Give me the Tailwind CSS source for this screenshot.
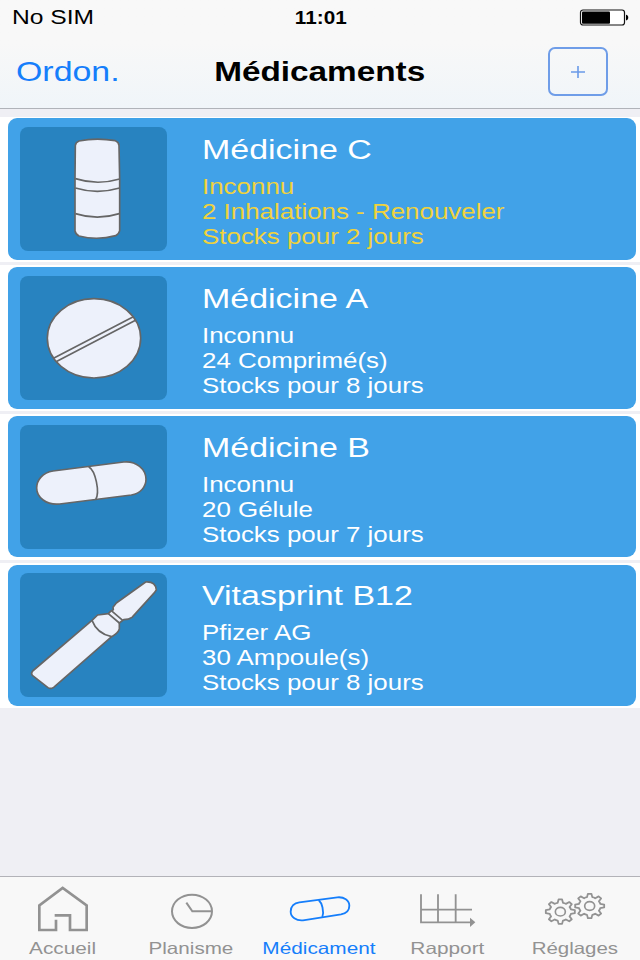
<!DOCTYPE html>
<html lang="fr">
<head>
    <meta charset="UTF-8">
    <meta name="viewport" content="width=device-width, initial-scale=1.0">
    <title>Médicaments</title>
    <script src="https://cdn.jsdelivr.net/npm/@tailwindcss/browser@4"></script>
</head>
<body class="w-[640px] h-[960px] overflow-hidden flex flex-col bg-[#efeff4] font-['Liberation_Sans',Arial,sans-serif] whitespace-nowrap">

    <!-- Status bar and navigation -->
    <header class="h-[109px] shrink-0 flex flex-col bg-linear-to-b from-[#f8f8f8] from-40% to-[#f0f5f9] border-b border-[#b0b3b9]">
        <div class="h-[35px] grid grid-cols-3 items-center pl-3 pr-[11px] text-black">
            <span class="text-[20px] leading-[35px] origin-left scale-x-[1.23] justify-self-start">No SIM</span>
            <span class="text-[19px] leading-[35px] font-bold scale-x-[1.09] justify-self-center">11:01</span>
            <svg class="w-[50px] h-[18px] justify-self-end" viewBox="0 0 50 18">
                <rect x="1.5" y="1" width="44" height="15" rx="2.5" fill="#fff" stroke="#111" stroke-width="1.2"/>
                <rect x="3" y="2.4" width="28" height="12.3" rx="1" fill="#000"/>
                <path d="M47 5.8c3 0 3 5.6 0 5.6z" fill="#000"/>
            </svg>
        </div>
        <div class="h-[73px] grid grid-cols-3 items-center pl-4 pr-8">
            <a href="#" class="text-[28px] leading-8 text-[#157efb] origin-left scale-x-[1.21] justify-self-start">Ordon.</a>
            <h1 class="text-[28px] leading-8 font-bold text-black scale-x-[1.19] justify-self-center ml-4">Médicaments</h1>
            <button class="w-[60px] h-[49px] rounded-[7px] border-2 border-[#6f9de8] justify-self-end flex items-center justify-center">
                <svg class="w-[14px] h-3" viewBox="0 0 14 12" fill="none" stroke="#6a9ae8" stroke-width="1.6"><path d="M0 6h14M7 0v12"/></svg>
            </button>
        </div>
    </header>

    <!-- Medicine list -->
    <main class="flex-1 pt-[7.5px]">
        <ul class="flex flex-col gap-[3.3px]">
            <li class="bg-white h-[145.5px] pt-[1.8px] pl-2 pr-1">
                <article class="h-[141.5px] rounded-[9px] bg-[#41a2e8] flex pl-[11.5px] pt-[8.7px]">
                    <svg class="w-[147px] h-[124px] rounded-lg bg-[#2883c0]" viewBox="59 51 441 372" preserveAspectRatio="none" fill="#edf1fb" stroke="#666" stroke-width="5" stroke-linejoin="round">
                        <path d="M225 106Q226 97 236 93Q288 82 345 92Q355 96 356 106L358 207V362Q356 372 346 377Q290 392 236 378Q226 373 224 363V207Z"/>
                        <path fill="none" d="M225 206Q291 227 358 207M225 234Q291 254 358 234M225 311Q291 332 357 311"/>
                    </svg>
                    <div class="ml-[35px] pt-[6px] origin-left scale-x-[1.205] text-[#f0d23c] text-[21.5px] leading-[25px]">
                        <h2 class="text-[28.2px] leading-8 mb-[10px] text-white">Médicine C</h2>
                        <p>Inconnu</p>
                        <p>2 Inhalations - Renouveler</p>
                        <p>Stocks pour 2 jours</p>
                    </div>
                </article>
            </li>
            <li class="bg-white h-[145.5px] pt-[1.8px] pl-2 pr-1">
                <article class="h-[141.5px] rounded-[9px] bg-[#41a2e8] flex pl-[11.5px] pt-[8.7px]">
                    <svg class="w-[147px] h-[124px] rounded-lg bg-[#2883c0]" viewBox="59 47 441 372" preserveAspectRatio="none" fill="#edf1fb" stroke="#666" stroke-width="5">
                        <ellipse cx="281" cy="234" rx="140" ry="119"/>
                        <path d="M161 293L399 169M167 304L407 179"/>
                    </svg>
                    <div class="ml-[35px] pt-[6px] origin-left scale-x-[1.205] text-white text-[21.5px] leading-[25px]">
                        <h2 class="text-[28.2px] leading-8 mb-[10px]">Médicine A</h2>
                        <p>Inconnu</p>
                        <p>24 Comprimé(s)</p>
                        <p>Stocks pour 8 jours</p>
                    </div>
                </article>
            </li>
            <li class="bg-white h-[145.5px] pt-[1.8px] pl-2 pr-1">
                <article class="h-[141.5px] rounded-[9px] bg-[#41a2e8] flex pl-[11.5px] pt-[8.7px]">
                    <svg class="w-[147px] h-[124px] rounded-lg bg-[#2883c0]" viewBox="59 44 441 372" preserveAspectRatio="none" fill="#edf1fb" stroke="#666" stroke-width="5">
                        <path d="M158 182L370 155C408 151 437 177 437 207C437 230 420 250 393 254L178 281C138 285 109 261 109 233C109 209 127 187 158 182Z"/>
                        <path fill="none" d="M265 169C286 181 299 246 286 268"/>
                    </svg>
                    <div class="ml-[35px] pt-[6px] origin-left scale-x-[1.205] text-white text-[21.5px] leading-[25px]">
                        <h2 class="text-[28.2px] leading-8 mb-[10px]">Médicine B</h2>
                        <p>Inconnu</p>
                        <p>20 Gélule</p>
                        <p>Stocks pour 7 jours</p>
                    </div>
                </article>
            </li>
            <li class="bg-white h-[145.5px] pt-[1.8px] pl-2 pr-1">
                <article class="h-[141.5px] rounded-[9px] bg-[#41a2e8] flex pl-[11.5px] pt-[8.7px]">
                    <svg class="w-[147px] h-[124px] rounded-lg bg-[#2883c0]" viewBox="59 40 441 372" preserveAspectRatio="none" fill="#edf1fb" stroke="#666" stroke-width="5" stroke-linejoin="round">
                        <path d="M275 182L292 166L324 162L333 153L339 150L338 143L348 130L436 67Q466 65 468 91L463 98L395 173Q386 180 370 180L357 190V208Q353 221 334 231L160 383Q151 389 143 384L96 347Q91 341 97 334Z"/>
                        <path fill="none" d="M275 182Q290 222 334 231M324 162L357 190M333 153L367 182"/>
                    </svg>
                    <div class="ml-[35px] pt-[6px] origin-left scale-x-[1.205] text-white text-[21.5px] leading-[25px]">
                        <h2 class="text-[28.2px] leading-8 mb-[10px]">Vitasprint B12</h2>
                        <p>Pfizer AG</p>
                        <p>30 Ampoule(s)</p>
                        <p>Stocks pour 8 jours</p>
                    </div>
                </article>
            </li>
        </ul>
    </main>

    <!-- Tab bar -->
    <nav class="h-[84px] shrink-0 grid grid-cols-5 bg-[#f8f8f8] border-t border-[#b2b2b8] text-[16.5px] leading-5 text-[#929292]">
        <a href="#" class="flex flex-col items-center pt-1">
            <svg class="w-32 h-[54px]" viewBox="0 33 384 162" fill="none" stroke="currentColor" stroke-width="8">
                <path d="M168 149V180H118V106L188 54L260 106V180H210V136H164"/>
            </svg>
            <span class="mt-[3px] scale-x-[1.26] -translate-x-px">Accueil</span>
        </a>
        <a href="#" class="flex flex-col items-center pt-1">
            <svg class="w-32 h-[54px]" viewBox="384 33 384 162" fill="none" stroke="currentColor" stroke-width="6">
                <ellipse cx="576" cy="124" rx="60" ry="50"/>
                <path d="M559 98L577 124H634"/>
            </svg>
            <span class="mt-[3px] scale-x-[1.25] -translate-x-px">Planisme</span>
        </a>
        <a href="#" class="flex flex-col items-center pt-1 text-[#157efb]">
            <svg class="w-32 h-[54px]" viewBox="18 33 384 162" fill="none" stroke="currentColor" stroke-width="5.5">
                <path d="M148 97L262 82C282 80 298 91 298 107C298 121 288 130 273 133L159 151C139 153 122 141 122 125C122 109 133 99 148 97Z"/>
                <path d="M206 90C216 99 223 124 217 141"/>
            </svg>
            <span class="mt-[3px] scale-x-[1.26] -translate-x-px">Médicament</span>
        </a>
        <a href="#" class="flex flex-col items-center pt-1">
            <svg class="w-32 h-[54px]" viewBox="-48 33 384 162" fill="none" stroke="currentColor" stroke-width="5.5">
                <path d="M63 73V157H212M114 73V157M167 73V157M63 119H216"/>
                <path d="M210 143L226 157L210 171Z" fill="currentColor" stroke="none"/>
            </svg>
            <span class="mt-[3px] scale-x-[1.26] -translate-x-px">Rapport</span>
        </a>
        <a href="#" class="flex flex-col items-center pt-1">
            <svg class="w-32 h-[54px]" viewBox="336 33 384 162" fill="none" stroke="currentColor" stroke-width="5">
                <defs>
                    <path id="gear" vector-effect="non-scaling-stroke" stroke-width="1.8" stroke-linejoin="round" d="M99-12V12L72 18Q70 30 63 38L78 61L61 78L38 63Q30 70 18 72L12 99H-12L-18 72Q-30 70-38 63L-61 78L-78 61L-63 38Q-70 30-72 18L-99 12V-12L-72-18Q-70-30-63-38L-78-61L-61-78L-38-63Q-30-70-18-72L-12-99H12L18-72Q30-70 38-63L61-78L78-61L63-38Q70-30 72-18Z"/>
                </defs>
                <use href="#gear" transform="translate(481 125) scale(.44 .37)"/>
                <ellipse cx="481" cy="125" rx="15" ry="13"/>
                <use href="#gear" transform="translate(569 108) scale(.44 .37)"/>
                <ellipse cx="569" cy="108" rx="15" ry="13"/>
            </svg>
            <span class="mt-[3px] scale-x-[1.24] -translate-x-px">Réglages</span>
        </a>
    </nav>
</body>
</html>
